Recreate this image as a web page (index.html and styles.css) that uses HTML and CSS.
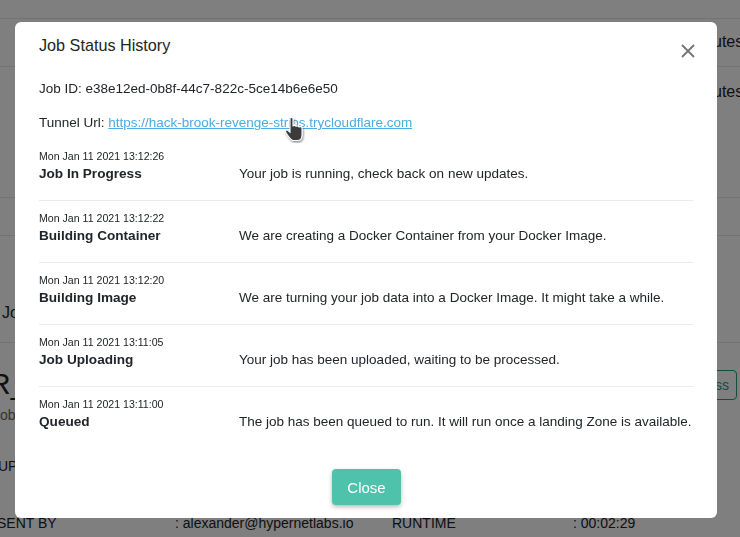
FILE: index.html
```html
<!DOCTYPE html>
<html>
<head>
<meta charset="utf-8">
<link rel="stylesheet" href="styles.css">
</head>
<body>
<div class="page">
  <div class="bg-top"></div>
  <div class="bg-row bg-row1"><span class="bg-min">27 minutes</span></div>
  <div class="bg-row bg-row2"><span class="bg-min">31 minutes</span></div>
  <div class="bg-row bg-row3"></div>
  <div class="bg-section"><span class="bg-jobs">Jobs</span></div>
  <div class="bg-detail">
    <div class="bg-head">
      <div>
        <div class="bg-big">R_job</div>
        <div class="bg-sub">Job details</div>
      </div>
      <span class="bg-btn">Success</span>
    </div>
    <div class="bg-up">UPLOADED</div>
    <div class="bg-info">
      <span class="bg-k">SENT BY</span><span class="bg-v">: alexander@hypernetlabs.io</span>
      <span class="bg-k2">RUNTIME</span><span class="bg-v2">: 00:02:29</span>
    </div>
  </div>
</div>
<div class="overlay"></div>
<div class="modal">
  <div class="modal-header">
    <h5 class="modal-title">Job Status History</h5>
    <svg class="close-x" width="14" height="14" viewBox="0 0 14 14"><path d="M1 1L13 13M13 1L1 13" stroke="#737373" stroke-width="1.8" fill="none"/></svg>
  </div>
  <div class="modal-body">
    <div class="meta">Job ID: e38e12ed-0b8f-44c7-822c-5ce14b6e6e50</div>
    <div class="meta tunnel">Tunnel Url: <a class="link" href="#">https://hack-brook-revenge-strips.trycloudflare.com</a></div>
    <div class="entries">
      <div class="entry">
        <div class="date">Mon Jan 11 2021 13:12:26</div>
        <div class="status">Job In Progress</div>
        <div class="desc">Your job is running, check back on new updates.</div>
      </div>
      <div class="entry">
        <div class="date">Mon Jan 11 2021 13:12:22</div>
        <div class="status">Building Container</div>
        <div class="desc">We are creating a Docker Container from your Docker Image.</div>
      </div>
      <div class="entry">
        <div class="date">Mon Jan 11 2021 13:12:20</div>
        <div class="status">Building Image</div>
        <div class="desc">We are turning your job data into a Docker Image. It might take a while.</div>
      </div>
      <div class="entry">
        <div class="date">Mon Jan 11 2021 13:11:05</div>
        <div class="status">Job Uploading</div>
        <div class="desc">Your job has been uploaded, waiting to be processed.</div>
      </div>
      <div class="entry">
        <div class="date">Mon Jan 11 2021 13:11:00</div>
        <div class="status">Queued</div>
        <div class="desc">The job has been queued to run. It will run once a landing Zone is available.</div>
      </div>
    </div>
  </div>
  <div class="modal-footer">
    <button class="btn-close">Close</button>
  </div>
</div>
<svg class="cursor" width="21" height="27" viewBox="0 0 21 27">
  <defs><filter id="sh" x="-30%" y="-30%" width="160%" height="160%"><feDropShadow dx="1" dy="1.5" stdDeviation="0.9" flood-color="#000" flood-opacity="0.45"/></filter></defs>
  <path filter="url(#sh)" d="M6,2.5 C6,1 9,1 9,2.5 L9,10.5 C9,9 12,9 12,10.8 C12,9.6 15,9.6 15,11.4 C15,10.3 18,10.3 18,12 L18,18.5 C18,21.5 16.5,24.5 14,24.5 L9.5,24.5 C7.5,24.5 5.5,22 3.5,19 L1.8,16.2 C0.8,14.6 2.4,13.2 3.8,14.3 L6,16.3 Z" fill="#3a3a3a" stroke="#fff" stroke-width="1.1"/>
</svg>
</body>
</html>
```
FILE: styles.css
```css
* { box-sizing: border-box; }
html, body { margin: 0; padding: 0; }
body {
  width: 740px;
  height: 537px;
  overflow: hidden;
  font-family: "Liberation Sans", Arial, sans-serif;
  color: #212529;
  background: #fff;
  position: relative;
}
.page { width: 740px; }
.bg-top { height: 19px; border-bottom: 1px solid #e6e6e6; }
.bg-row { border-bottom: 1px solid #e6e6e6; padding-left: 665px; white-space: nowrap; font-size: 16px; color: #222; }
.bg-row1 { height: 48px; padding-top: 14px; }
.bg-row2 { height: 131px; padding-top: 16px; }
.bg-row3 { height: 38px; }
.bg-section { height: 107px; border-bottom: 1px solid #e6e6e6; padding: 68px 0 0 2px; font-size: 16px; color: #222; }
.bg-head { display: flex; justify-content: space-between; align-items: flex-start; padding-top: 24px; }
.bg-big { font-size: 30px; font-weight: 300; color: #222; margin-left: -11px; line-height: 34px; }
.bg-sub { font-size: 14px; color: #666; margin-left: -7px; line-height: 20px; margin-top: 4px; }
.bg-btn { margin-top: 3px; margin-right: 3px; border: 1px solid #2a9d7c; color: #2a9d7c; border-radius: 4px; padding: 5px 7px 5px 10px; font-size: 14px; line-height: 18px; }
.bg-up { font-size: 14px; padding-top: 33px; margin-left: -2px; color: #222; }
.bg-info { display: flex; font-size: 14px; padding-top: 41px; color: #222; white-space: nowrap; }
.bg-k { flex: none; width: 178px; margin-left: -3px; }
.bg-v { flex: none; width: 217px; }
.bg-k2 { flex: none; width: 181px; }
.bg-v2 { flex: none; }

.overlay {
  position: fixed;
  inset: 0;
  background: rgba(0, 0, 0, 0.5);
}
.modal {
  position: fixed;
  top: 22px;
  left: 15px;
  width: 702px;
  height: 496px;
  background: #fff;
  border-radius: 6px;
  display: flex;
  flex-direction: column;
}
.modal-header {
  display: flex;
  justify-content: space-between;
  align-items: flex-start;
  padding: 12px 22px 0 24px;
}
.modal-title {
  margin: 0;
  font-size: 16.2px;
  font-weight: 400;
  line-height: 22px;
  color: #212529;
}
.close-x { margin-top: 10px; }
.modal-body { padding: 21px 24px 0 24px; }
.meta { font-size: 13.5px; line-height: 20px; color: #212529; }
.tunnel { margin-top: 14px; }
.link { color: #4aade2; text-decoration: underline; }
.entries { margin-top: 6px; }
.entry {
  display: grid;
  grid-template-columns: 200px 1fr;
  grid-template-rows: 14px 20px;
  padding: 11px 0 16px;
  border-bottom: 1px solid #e9ecef;
}
.entry:last-child { border-bottom: none; }
.date { grid-column: 1 / 3; font-size: 10.6px; line-height: 13px; color: #212529; }
.status { grid-column: 1; grid-row: 2; font-size: 13.6px; line-height: 20px; font-weight: 700; }
.desc { grid-column: 2; grid-row: 2; font-size: 13.5px; line-height: 20px; white-space: nowrap; }
.modal-footer {
  display: flex;
  justify-content: center;
  padding-top: 21px;
}
.btn-close {
  width: 69px;
  height: 36px;
  border: none;
  border-radius: 4px;
  background: #4ec2ab;
  color: #fff;
  font-family: "Liberation Sans", Arial, sans-serif;
  font-size: 15px;
  box-shadow: 0 2px 4px rgba(0, 0, 0, 0.28);
  margin-left: 1px;
}
.cursor {
  position: fixed;
  left: 284px;
  top: 116px;
}
```
